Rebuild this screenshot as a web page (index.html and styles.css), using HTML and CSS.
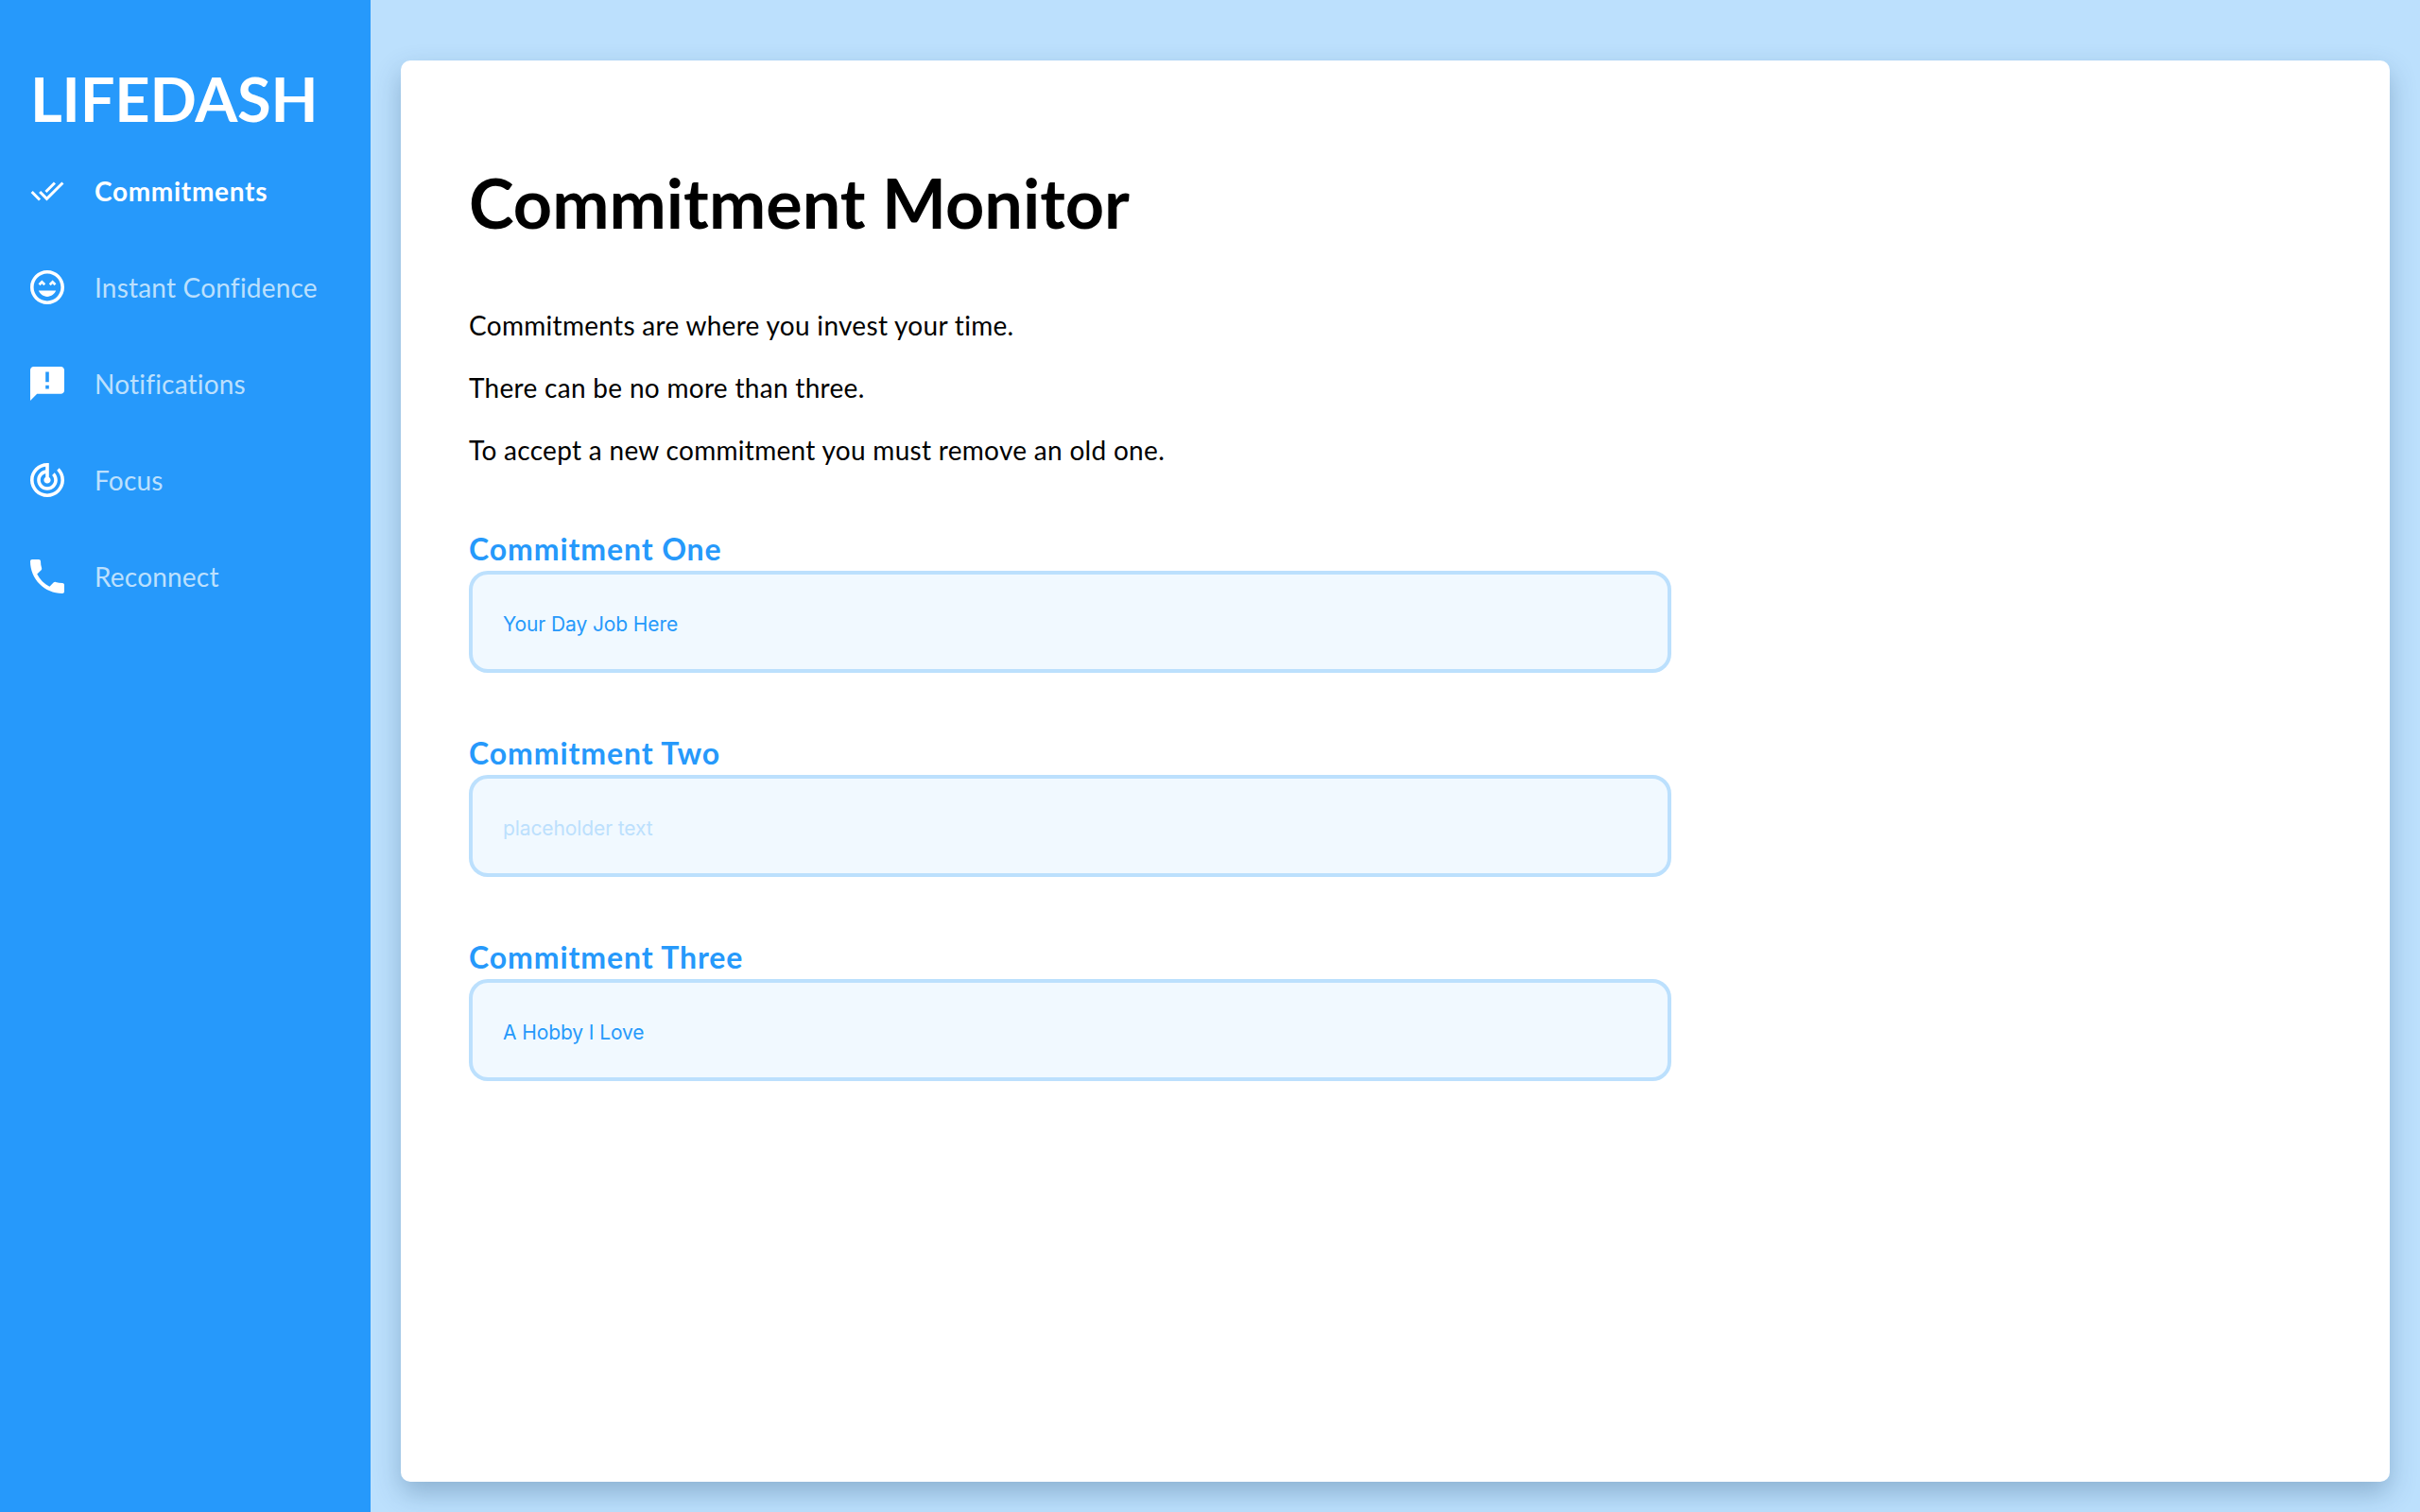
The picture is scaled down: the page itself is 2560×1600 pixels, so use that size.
FILE: index.html
```html
<!DOCTYPE html>
<html lang="en">
<head>
<meta charset="utf-8">
<title>LifeDash</title>
<link rel="stylesheet" href="styles.css">
</head>
<body>
<div class="app">
  <aside class="sidebar">
    <div class="logo">LIFEDASH</div>
    <nav class="nav">
      <a class="nav-item active"><svg class="icon" viewBox="0 0 24 24"><path d="M18 7l-1.41-1.41-6.34 6.34 1.41 1.41L18 7zm4.24-1.41L11.66 16.17 7.48 12l-1.41 1.41L11.66 19l12-12-1.42-1.41zM.41 13.41L6 19l1.41-1.41L1.83 12 .41 13.41z"/></svg><span>Commitments</span></a>
      <a class="nav-item"><svg class="icon" viewBox="2 2 20 20"><path d="M11.99 2C6.47 2 2 6.47 2 12s4.47 10 9.99 10S22 17.53 22 12 17.52 2 11.99 2zM12 20c-4.42 0-8-3.58-8-8s3.58-8 8-8 8 3.58 8 8-3.58 8-8 8zm1-10.06L14.06 11l1.06-1.06L16.18 11l1.06-1.06-2.12-2.12zm-4.12 0L9.94 11 11 9.94 8.88 7.82 6.76 9.94 7.82 11zM12 17.5c2.33 0 4.31-1.46 5.11-3.5H6.89c.8 2.04 2.78 3.5 5.11 3.5z"/></svg><span>Instant Confidence</span></a>
      <a class="nav-item"><svg class="icon" viewBox="2 2 20 20"><path d="M20 2H4c-1.1 0-1.99.9-1.99 2L2 22l4-4h14c1.1 0 2-.9 2-2V4c0-1.1-.9-2-2-2zm-7 9h-2V5h2v6zm0 4h-2v-2h2v2z"/></svg><span>Notifications</span></a>
      <a class="nav-item"><svg class="icon" viewBox="2 2 20 20"><path d="M19.07 4.93l-1.41 1.41C19.1 7.79 20 9.79 20 12c0 4.42-3.58 8-8 8s-8-3.58-8-8c0-4.08 3.05-7.44 7-7.93v2.02C8.16 6.57 6 9.03 6 12c0 3.31 2.69 6 6 6s6-2.69 6-6c0-1.66-.67-3.16-1.76-4.24l-1.41 1.41C15.55 9.9 16 10.9 16 12c0 2.21-1.79 4-4 4s-4-1.79-4-4c0-1.86 1.28-3.41 3-3.86v2.14c-.6.35-1 .98-1 1.72 0 1.1.9 2 2 2s2-.9 2-2c0-.74-.4-1.38-1-1.72V2h-1C6.48 2 2 6.48 2 12s4.48 10 10 10 10-4.48 10-10c0-2.76-1.12-5.26-2.93-7.07z"/></svg><span>Focus</span></a>
      <a class="nav-item"><svg class="icon" viewBox="3 3 18 18"><path d="M6.62 10.79c1.44 2.83 3.76 5.14 6.59 6.59l2.2-2.2c.27-.27.67-.36 1.02-.24 1.12.37 2.33.57 3.57.57.55 0 1 .45 1 1V20c0 .55-.45 1-1 1-9.39 0-17-7.61-17-17 0-.55.45-1 1-1h3.5c.55 0 1 .45 1 1 0 1.25.2 2.45.57 3.57.11.35.03.74-.25 1.02l-2.2 2.2z"/></svg><span>Reconnect</span></a>
    </nav>
  </aside>
  <main class="main">
    <section class="card">
      <h1 class="title">Commitment Monitor</h1>
      <div class="intro">
        <p>Commitments are where you invest your time.</p>
        <p>There can be no more than three.</p>
        <p>To accept a new commitment you must remove an old one.</p>
      </div>
      <form class="fields">
        <label class="field"><span class="field-label">Commitment One</span><input class="field-input" type="text" value="Your Day Job Here"></label>
        <label class="field"><span class="field-label">Commitment Two</span><input class="field-input" type="text" placeholder="placeholder text"></label>
        <label class="field"><span class="field-label">Commitment Three</span><input class="field-input" type="text" value="A Hobby I Love"></label>
      </form>
    </section>
  </main>
</div>
</body>
</html>
```

FILE: styles.css
```css
* { box-sizing: border-box; }
html, body { margin: 0; height: 100%; }
body { background: #BCE0FD; font-family: "Lato", "Noto Sans", sans-serif; color: #000; }
.app { display: flex; height: 1600px; overflow: hidden; }

.sidebar { flex: 0 0 392px; background: #2699FB; padding: 64px 0 0 32px; }
.logo { color: #fff; font-size: 65px; line-height: 80px; font-weight: 700; letter-spacing: -0.2px; }
.nav { display: flex; flex-direction: column; margin-top: 7px; }
.nav-item { display: flex; align-items: center; gap: 32px; height: 102px; color: #BCE0FD; font-size: 28px; letter-spacing: 0.2px; }
.nav-item.active { color: #fff; font-weight: 700; letter-spacing: 0.7px; }
.icon { width: 36px; height: 36px; fill: #fff; flex: none; }

.main { flex: 1; padding: 64px 32px 32px; }
.card { height: 100%; background: #fff; border-radius: 10px; box-shadow: 0 12px 28px rgba(30, 70, 110, 0.3); padding: 0 72px; }
.title { margin: 0; padding-top: 107px; font-size: 72px; line-height: 86px; font-weight: 700; }
.intro { margin-top: 69px; font-size: 28px; line-height: 36px; letter-spacing: 0.3px; }
.intro p { margin: 0 0 30px; }

.fields { display: flex; flex-direction: column; gap: 66px; margin-top: 68px; width: 1272px; }
.field { display: flex; flex-direction: column; }
.field-label { color: #2699FB; font-size: 32px; line-height: 38px; font-weight: 700; letter-spacing: 0.9px; margin-bottom: 4px; }
.field-input { width: 100%; height: 108px; background: #F1F9FF; border: 4px solid #BCE0FD; border-radius: 20px; padding: 4px 32px 0; color: #2699FB; font-family: "Inter", sans-serif; font-size: 21px; letter-spacing: -0.1px; outline: none; }
.field-input::placeholder { color: #BCE0FD; opacity: 1; }
```
